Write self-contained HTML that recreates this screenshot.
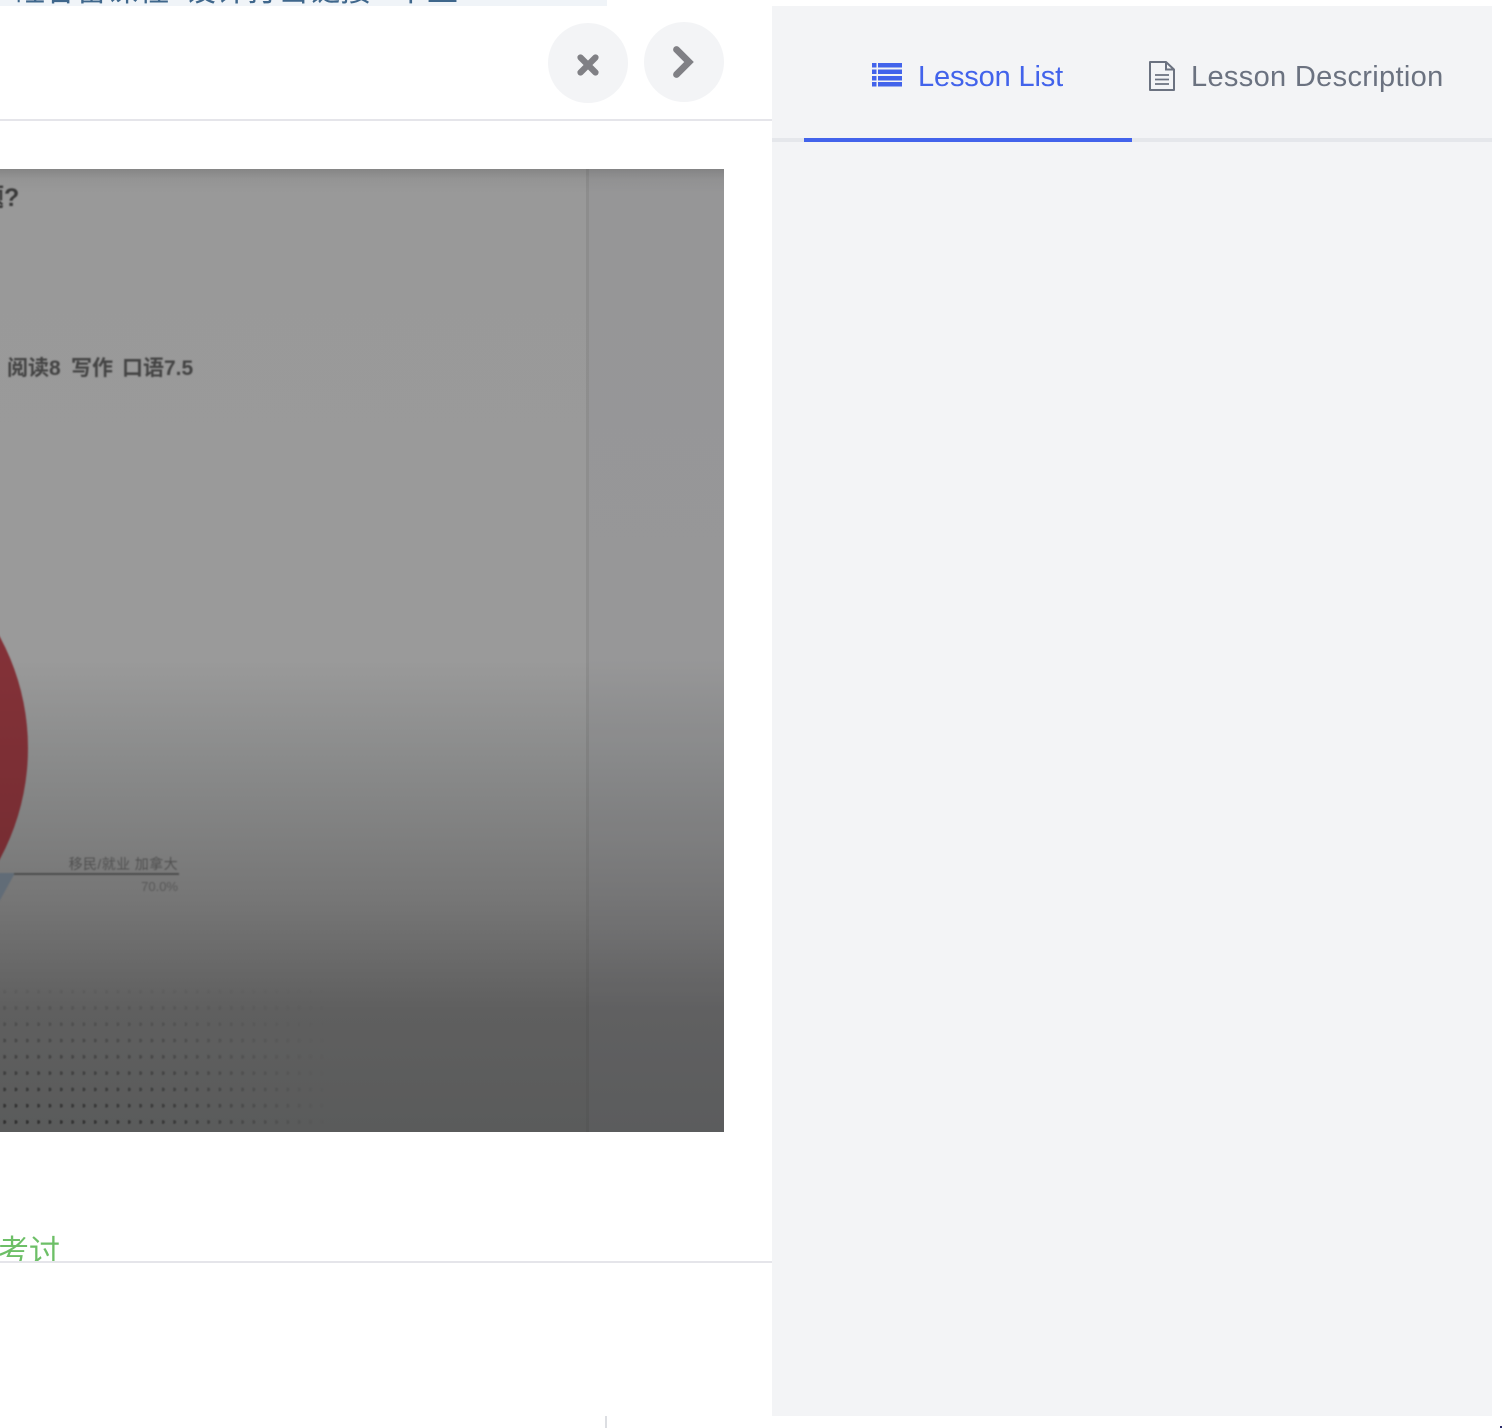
<!DOCTYPE html>
<html lang="zh">
<head>
<meta charset="utf-8">
<style>
html,body{margin:0;padding:0;width:1502px;height:1428px;overflow:hidden;background:#fff;font-family:"Liberation Sans","Noto Sans CJK SC",sans-serif}
.a{position:absolute}
#top{left:0;top:0;width:607px;height:6px;background:#f0f4f8;overflow:hidden}
#top span{position:absolute;top:-27px;font-size:31px;line-height:36px;color:#3f678c;white-space:nowrap}
.circ{width:80px;height:80px;border-radius:50%;background:#f3f4f6}
#img{left:0;top:169px;width:724px;height:963px;overflow:hidden;background:linear-gradient(180deg,#858585 0,#949494 10px,#999 24px,#9a9a9a 490px,#8a8b8b 590px,#767676 730px,#5f5f5f 840px,#5a5b5b 963px)}
#side{left:772px;top:6px;width:720px;height:1410px;background:#f3f4f6}
</style>
</head>
<body>
<div class="a" id="top"><span style="left:14px">硅谷留课程</span><span style="left:185px">设计打击链接</span><span style="left:378px">"</span><span style="left:398px">卜</span><span style="left:427px">上</span></div>

<div class="a" style="left:0;top:119px;width:772px;height:2px;background:#e5e5ea"></div>

<div class="a circ" style="left:548px;top:23px"></div>
<div class="a circ" style="left:644px;top:22px"></div>
<svg class="a" style="left:576px;top:53px" width="24" height="24" viewBox="0 0 24 24"><path d="M4.500 4.500L19.500 19.500M19.500 4.500L4.500 19.500" stroke="#808085" stroke-width="6.200" stroke-linecap="round"/></svg>
<svg class="a" style="left:668px;top:44px" width="30" height="36" viewBox="0 0 30 36"><path d="M8.500 5.500L21 18L8.500 30.500" fill="none" stroke="#808085" stroke-width="6.800" stroke-linecap="round" stroke-linejoin="miter"/></svg>

<div class="a" id="img">
  <div class="a" style="left:586px;top:0;width:3px;height:963px;background:rgba(60,60,60,.13)"></div>
  <div class="a" style="left:589px;top:0;width:135px;height:963px;background:rgba(110,115,125,.07)"></div>
  <svg class="a" style="left:-20px;top:0;filter:blur(.6px)" width="744" height="983" viewBox="-20 0 744 983">
    <defs>
      <pattern id="dots" x="3.300" y="820.600" width="11.330" height="16.300" patternUnits="userSpaceOnUse"><circle cx="1" cy="2" r="1.900" fill="#2c2c2c"/></pattern>
      <linearGradient id="fx" x1="0" y1="0" x2="1" y2="0"><stop offset="0" stop-color="#fff"/><stop offset=".55" stop-color="#bbb"/><stop offset="1" stop-color="#000"/></linearGradient>
      <linearGradient id="fy" x1="0" y1="0" x2="0" y2="1"><stop offset="0" stop-color="#111"/><stop offset="1" stop-color="#fff"/></linearGradient>
      <mask id="mx"><rect x="-20" y="815" width="350" height="148" fill="url(#fx)"/></mask>
      <mask id="my"><rect x="-20" y="815" width="350" height="148" fill="url(#fy)"/></mask>
    </defs>
    <g mask="url(#mx)"><g mask="url(#my)"><rect x="-20" y="815" width="350" height="148" fill="url(#dots)"/></g></g>
  </svg>
  <svg class="a" style="left:-20px;top:0;filter:blur(.9px)" width="744" height="963" viewBox="-20 0 744 963">
    <defs>
      <linearGradient id="red" x1="0" y1="0" x2="0" y2="1"><stop offset="0" stop-color="#8b343b"/><stop offset="1" stop-color="#6f2a2f"/></linearGradient>
    </defs>
    <circle cx="-206" cy="579" r="234" fill="url(#red)"/>
    <path d="M-20 704H15L-16 760H-20Z" fill="#616c77"/>
    <rect x="14" y="704" width="165" height="2" fill="#4d4d4d"/>
    <g font-family="'Liberation Sans','Noto Sans CJK SC',sans-serif">
      <text x="-21" y="37" font-size="25" font-weight="700" fill="#3a3a3a">题?</text>
      <g font-size="21" font-weight="700" fill="#444">
        <text x="7" y="206">阅读8</text>
        <text x="71" y="206">写作</text>
        <text x="122" y="206">口语7.5</text>
      </g>
      <text x="178" y="700" text-anchor="end" font-size="14" letter-spacing=".4" fill="#505050">移民/就业 加拿大</text>
      <text x="178" y="722" text-anchor="end" font-size="13" fill="#585858">70.0%</text>
    </g>
  </svg>
</div>

<div class="a" style="left:0;top:1232px;width:772px;height:29px;overflow:hidden">
  <span class="a" style="left:-2px;top:2px;font-size:31px;line-height:36px;color:#6dbf67;white-space:nowrap">考讨</span>
</div>
<div class="a" style="left:0;top:1261px;width:772px;height:2px;background:#e5e5ea"></div>
<div class="a" style="left:605px;top:1416px;width:2px;height:12px;background:#dcdee2"></div>

<div class="a" id="side">
  <div class="a" style="left:0;top:132px;width:720px;height:4px;background:#e5e7eb"></div>
  <div class="a" style="left:32px;top:132px;width:328px;height:4px;background:#4263eb"></div>
</div>

<svg class="a" style="left:871px;top:62px" width="32" height="26" viewBox="0 0 32 26" fill="#4263eb">
  <rect x="1" y="1" width="4.500" height="4.500"/><rect x="7" y="1" width="24" height="4.500"/>
  <rect x="1" y="7.500" width="4.500" height="4.500"/><rect x="7" y="7.500" width="24" height="4.500"/>
  <rect x="1" y="14" width="4.500" height="4.500"/><rect x="7" y="14" width="24" height="4.500"/>
  <rect x="1" y="20" width="4.500" height="4.500"/><rect x="7" y="20" width="24" height="4.500"/>
</svg>
<div class="a" style="left:918px;top:59px;font-size:29px;line-height:36px;letter-spacing:-.15px;color:#4263eb;white-space:nowrap;width:150px">Lesson List</div>

<svg class="a" style="left:1148px;top:60px" width="28" height="32" viewBox="0 0 28 32" fill="none" stroke="#6b7280" stroke-width="2">
  <path d="M2 2H18L26 9.500V30H2Z" stroke-linejoin="round"/>
  <path d="M18 2V9.500H26"/>
  <path d="M7 15H21M7 19.500H21M7 24H21" stroke-width="1.800"/>
</svg>
<div class="a" style="left:1191px;top:59px;font-size:29px;line-height:36px;letter-spacing:.33px;color:#6b7280;white-space:nowrap">Lesson Description</div>

<div class="a" style="left:1500px;top:1426px;width:2px;height:2px;background:#2a2a6a"></div>
</body>
</html>
